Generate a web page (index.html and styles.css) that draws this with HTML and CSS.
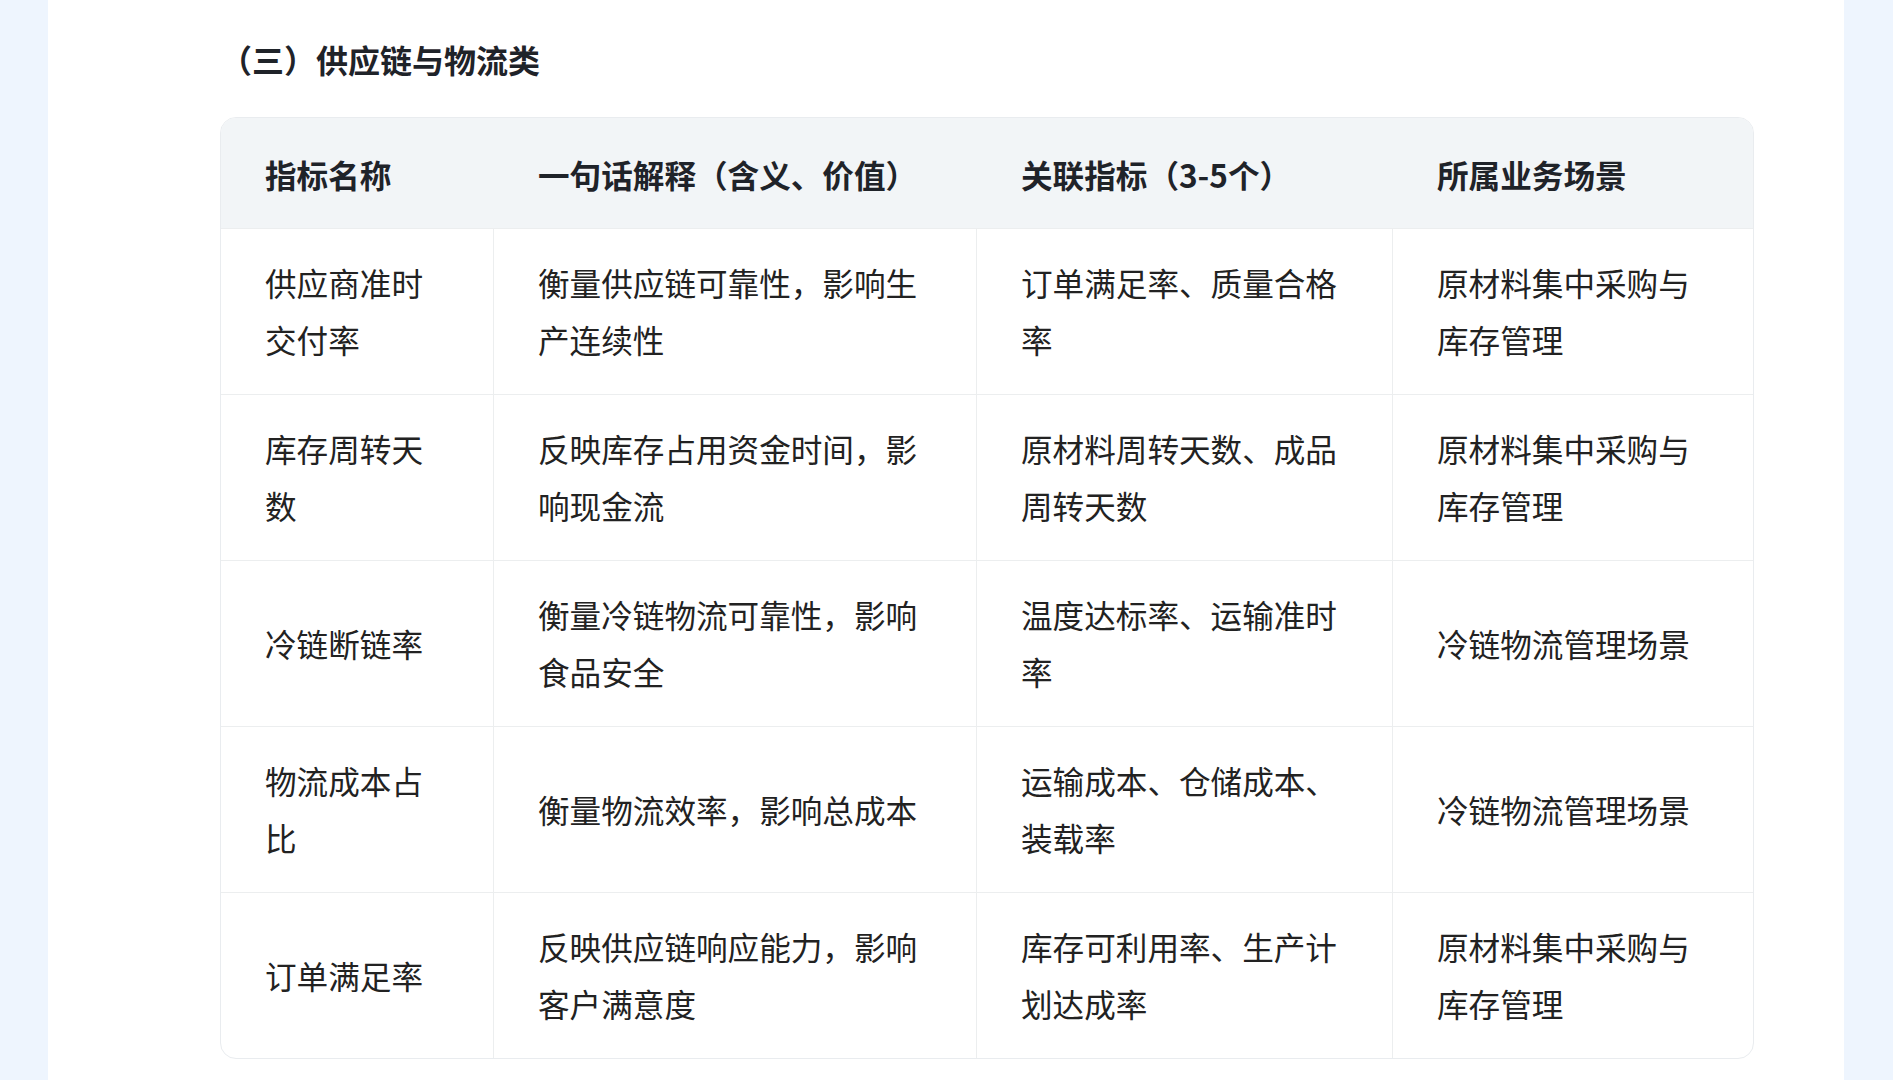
FILE: index.html
```html
<!DOCTYPE html>
<html lang="zh-CN">
<head>
<meta charset="utf-8">
<title>供应链与物流类</title>
<link rel="stylesheet" href="styles.css">
</head>
<body>
<div class="page">
  <main class="content">
    <h3 class="section-title">（三）供应链与物流类</h3>
    <div class="table-wrap">
      <table class="metrics">
        <colgroup>
          <col class="c1"><col class="c2"><col class="c3"><col class="c4">
        </colgroup>
        <thead>
          <tr>
            <th>指标名称</th>
            <th>一句话解释（含义、价值）</th>
            <th>关联指标（3-5个）</th>
            <th>所属业务场景</th>
          </tr>
        </thead>
        <tbody>
          <tr>
            <td>供应商准时交付率</td>
            <td>衡量供应链可靠性，影响生产连续性</td>
            <td>订单满足率、质量合格率</td>
            <td>原材料集中采购与库存管理</td>
          </tr>
          <tr>
            <td>库存周转天数</td>
            <td>反映库存占用资金时间，影响现金流</td>
            <td>原材料周转天数、成品周转天数</td>
            <td>原材料集中采购与库存管理</td>
          </tr>
          <tr>
            <td>冷链断链率</td>
            <td>衡量冷链物流可靠性，影响食品安全</td>
            <td>温度达标率、运输准时率</td>
            <td>冷链物流管理场景</td>
          </tr>
          <tr>
            <td>物流成本占比</td>
            <td>衡量物流效率，影响总成本</td>
            <td>运输成本、仓储成本、装载率</td>
            <td>冷链物流管理场景</td>
          </tr>
          <tr>
            <td>订单满足率</td>
            <td>反映供应链响应能力，影响客户满意度</td>
            <td>库存可利用率、生产计划达成率</td>
            <td>原材料集中采购与库存管理</td>
          </tr>
        </tbody>
      </table>
    </div>
  </main>
</div>
</body>
</html>
```

FILE: styles.css
```css
html, body {
  margin: 0;
  padding: 0;
}

body {
  background: #eef5fe;
  font-family: "Noto Sans CJK SC", "Noto Sans", sans-serif;
  color: #1f2329;
}

.page {
  display: flex;
  justify-content: flex-start;
  padding: 0 49px 0 48px;
  min-height: 1080px;
}

.content {
  flex: 1;
  background: #ffffff;
  padding: 37px 90px 20px 172px;
}

.section-title {
  margin: 0 0 36px 0;
  font-size: 32px;
  line-height: 44px;
  font-weight: 700;
  color: #1f2329;
}

.table-wrap {
  border: 1px solid #e9ecef;
  border-radius: 16px;
  overflow: hidden;
}

.metrics {
  width: 100%;
  table-layout: fixed;
  border-collapse: separate;
  border-spacing: 0;
  font-size: 31.6px;
  line-height: 57px;
}

.c1 { width: 273px; }
.c2 { width: 483px; }
.c3 { width: 416px; }
.c4 { width: auto; }

.metrics th,
.metrics td {
  padding: 25px 44px 26px 44px;
  text-align: left;
  vertical-align: middle;
  border-right: 1px solid #eceeef;
  border-bottom: 1px solid #eceeef;
}

.metrics th:last-child,
.metrics td:last-child {
  border-right: none;
}

.metrics tbody tr:last-child td {
  border-bottom: none;
}

.metrics th {
  padding-top: 28px;
  padding-bottom: 25px;
  background: #f2f5f7;
  font-weight: 700;
  color: #1f2329;
  border-right: none;
}

.metrics td {
  font-weight: 400;
  color: #222222;
}
```
